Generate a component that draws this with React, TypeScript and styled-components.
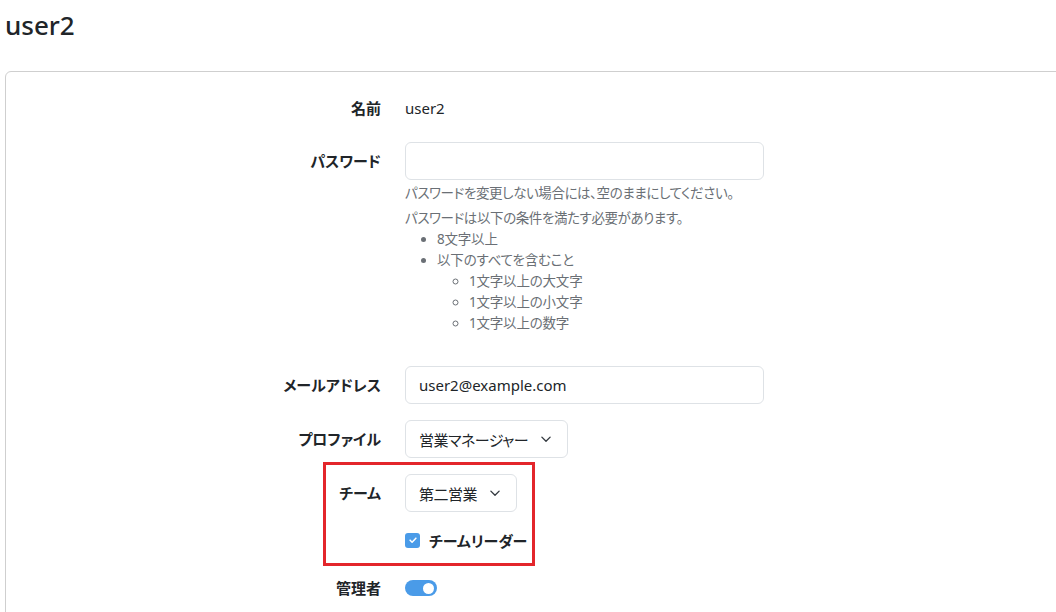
import React from "react";
import styled, { createGlobalStyle } from "styled-components";

const Global = createGlobalStyle`
  html, body { margin: 0; padding: 0; background: #fff; overflow: hidden; }
  body {
    font-family: "Noto Sans", "Noto Sans CJK JP", sans-serif;
    font-feature-settings: "palt";
    color: #212529;
    font-size: 15px;
  }
  * { box-sizing: border-box; }
`;

const Page = styled.div`
  padding: 10px 0 0 5px;
  width: 1056px;
  height: 612px;
  overflow: hidden;
`;

const Title = styled.h1`
  margin: 0;
  font-size: 26px;
  line-height: 31px;
  font-weight: 500;
  color: #212529;
`;

const Card = styled.div`
  position: relative;
  margin-top: 30px;
  width: 1080px;
  border: 1px solid #cfcfcf;
  border-radius: 6px;
  padding: 17px 0 40px 0;
  display: flex;
  flex-direction: column;
`;

const Row = styled.div<{ $mb?: number; $align?: string }>`
  display: grid;
  grid-template-columns: 375px 1fr;
  column-gap: 24px;
  align-items: ${(p) => p.$align || "center"};
  margin-bottom: ${(p) => (p.$mb ?? 16)}px;
`;

const Label = styled.div<{ $h?: number }>`
  text-align: right;
  font-weight: 700;
  font-size: 15px;
  line-height: ${(p) => p.$h ?? 38}px;
  color: #212529;
`;

const Value = styled.div`
  line-height: 38px;
  font-size: 15px;
`;

const Field = styled.div`
  display: flex;
  flex-direction: column;
  align-items: flex-start;
`;

const ControlCell = styled.div`
  display: flex;
  align-items: center;
  min-height: 24px;
`;

const Input = styled.input`
  width: 359px;
  height: 38px;
  border: 1px solid #dee2e6;
  border-radius: 6px;
  padding: 0 13px;
  font-family: inherit;
  font-size: 15px;
  color: #212529;
  outline: none;
  background: #fff;
`;

const Help = styled.div<{ $mt?: number }>`
  color: #6a6f75;
  font-size: 13.5px;
  line-height: 21px;
  letter-spacing: -0.4px;
  margin-top: ${(p) => p.$mt ?? 0}px;
`;

const List = styled.ul<{ $nested?: boolean }>`
  margin: 0 0 ${(p) => (p.$nested ? 0 : 16)}px 0;
  padding-left: 32px;
  list-style: ${(p) => (p.$nested ? "circle" : "disc")};
  color: #6a6f75;
  font-size: 13.5px;
  line-height: 21px;
  letter-spacing: -0.2px;
`;

const SelectBox = styled.div`
  height: 38px;
  border: 1px solid #dee2e6;
  border-radius: 6px;
  padding: 0 15px 0 13px;
  display: inline-flex;
  align-items: center;
  gap: 12px;
  font-size: 15px;
  letter-spacing: -0.5px;
  color: #212529;
  background: #fff;
`;

const CheckRow = styled.label`
  display: inline-flex;
  align-items: center;
  gap: 9px;
  height: 24px;
  font-weight: 700;
  font-size: 15px;
`;

const CheckBox = styled.span`
  width: 15px;
  height: 15px;
  border-radius: 3px;
  background: #4a9be8;
  display: inline-flex;
  align-items: center;
  justify-content: center;
`;

const Toggle = styled.span`
  width: 32px;
  height: 16px;
  border-radius: 8px;
  background: #4a9be8;
  display: inline-flex;
  align-items: center;
  justify-content: flex-end;
  padding-right: 3px;
`;

const Knob = styled.span`
  width: 11px;
  height: 11px;
  border-radius: 50%;
  background: #fff;
`;

const Highlight = styled.div`
  position: absolute;
  left: 317px;
  top: 390px;
  width: 212px;
  height: 104px;
  border: 3px solid #e3262b;
  pointer-events: none;
`;

const Chevron = () => (
  <svg width="12" height="12" viewBox="0 0 16 16" fill="none">
    <path d="M2.5 5.5L8 11l5.5-5.5" stroke="#343a40" strokeWidth="1.8" strokeLinecap="round" strokeLinejoin="round" />
  </svg>
);

export default function App() {
  return (
    <>
      <Global />
      <Page>
        <Title>user2</Title>
        <Card>
          <Row $mb={15}>
            <Label>名前</Label>
            <Value>user2</Value>
          </Row>
          <Row $align="start" $mb={16}>
            <Label>パスワード</Label>
            <Field>
              <Input type="password" />
              <Help $mt={3}>パスワードを変更しない場合には、空のままにしてください。</Help>
              <Help $mt={4}>パスワードは以下の条件を満たす必要があります。</Help>
              <List>
                <li>8文字以上</li>
                <li>
                  以下のすべてを含むこと
                  <List $nested>
                    <li>1文字以上の大文字</li>
                    <li>1文字以上の小文字</li>
                    <li>1文字以上の数字</li>
                  </List>
                </li>
              </List>
            </Field>
          </Row>
          <Row>
            <Label>メールアドレス</Label>
            <Input defaultValue="user2@example.com" />
          </Row>
          <Row>
            <Label>プロファイル</Label>
            <ControlCell>
              <SelectBox>
                営業マネージャー
                <Chevron />
              </SelectBox>
            </ControlCell>
          </Row>
          <Row>
            <Label>チーム</Label>
            <ControlCell>
              <SelectBox>
                第二営業
                <Chevron />
              </SelectBox>
            </ControlCell>
          </Row>
          <Row $mb={24}>
            <div />
            <ControlCell>
              <CheckRow>
                <CheckBox>
                  <svg width="10" height="10" viewBox="0 0 12 12" fill="none">
                    <path d="M2.5 6.2l2.4 2.4 4.6-4.8" stroke="#fff" strokeWidth="1.8" strokeLinecap="round" strokeLinejoin="round" />
                  </svg>
                </CheckBox>
                チームリーダー
              </CheckRow>
            </ControlCell>
          </Row>
          <Row>
            <Label $h={24}>管理者</Label>
            <ControlCell>
              <Toggle>
                <Knob />
              </Toggle>
            </ControlCell>
          </Row>
          <Highlight />
        </Card>
      </Page>
    </>
  );
}
